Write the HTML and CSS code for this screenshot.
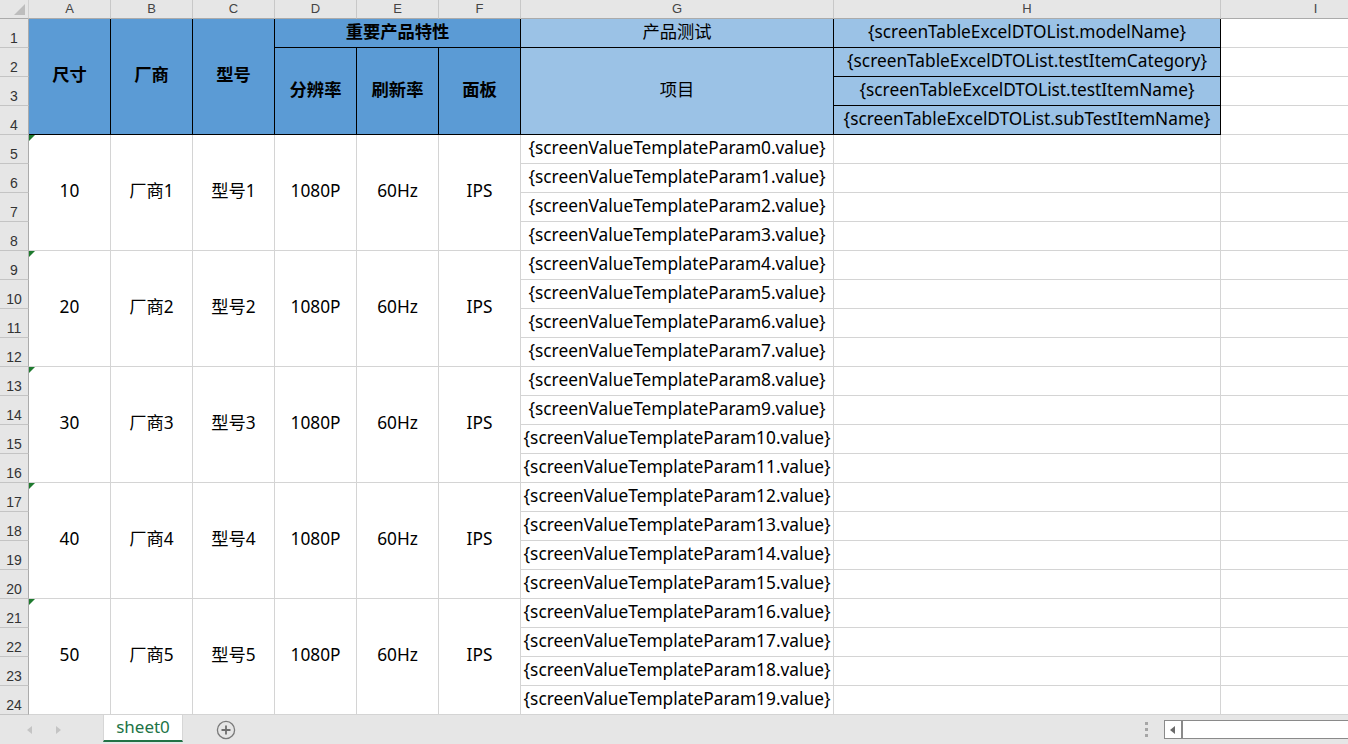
FILE: index.html
```html
<!DOCTYPE html>
<html lang="zh-CN">
<head>
<meta charset="utf-8">
<title>sheet0</title>
<link rel="stylesheet" href="styles.css">
</head>
<body>
<div class="app">
  <div class="viewport">
    <div class="sheet">
      <div class="corner"><svg class="corner-tri" width="12" height="12" viewBox="0 0 12 12"><polygon points="11,0 11,11 0,11" fill="#bdbdbd"/></svg></div>
      <div class="ch">A</div><div class="ch">B</div><div class="ch">C</div><div class="ch">D</div><div class="ch">E</div><div class="ch">F</div><div class="ch">G</div><div class="ch">H</div><div class="ch">I</div>

      <div class="rh">1</div>
      <div class="c hd bk sp4 b">尺寸</div>
      <div class="c hd bk sp4 b">厂商</div>
      <div class="c hd bk sp4 b">型号</div>
      <div class="c hd bk cs3 b">重要产品特性</div>
      <div class="c hl bk">产品测试</div>
      <div class="c hl bk">{screenTableExcelDTOList.modelName}</div>
      <div class="c"></div>

      <div class="rh">2</div>
      <div class="c hd bk sp3 b">分辨率</div>
      <div class="c hd bk sp3 b">刷新率</div>
      <div class="c hd bk sp3 b">面板</div>
      <div class="c hl bk sp3">项目</div>
      <div class="c hl bk">{screenTableExcelDTOList.testItemCategory}</div>
      <div class="c"></div>

      <div class="rh">3</div>
      <div class="c hl bk">{screenTableExcelDTOList.testItemName}</div>
      <div class="c"></div>

      <div class="rh">4</div>
      <div class="c hl bk">{screenTableExcelDTOList.subTestItemName}</div>
      <div class="c"></div>

      <!-- group 1 -->
      <div class="rh">5</div>
      <div class="c sp4 flag">10</div><div class="c sp4">厂商1</div><div class="c sp4">型号1</div><div class="c sp4">1080P</div><div class="c sp4">60Hz</div><div class="c sp4">IPS</div>
      <div class="c">{screenValueTemplateParam0.value}</div><div class="c"></div><div class="c"></div>
      <div class="rh">6</div><div class="c">{screenValueTemplateParam1.value}</div><div class="c"></div><div class="c"></div>
      <div class="rh">7</div><div class="c">{screenValueTemplateParam2.value}</div><div class="c"></div><div class="c"></div>
      <div class="rh">8</div><div class="c">{screenValueTemplateParam3.value}</div><div class="c"></div><div class="c"></div>

      <!-- group 2 -->
      <div class="rh">9</div>
      <div class="c sp4 flag">20</div><div class="c sp4">厂商2</div><div class="c sp4">型号2</div><div class="c sp4">1080P</div><div class="c sp4">60Hz</div><div class="c sp4">IPS</div>
      <div class="c">{screenValueTemplateParam4.value}</div><div class="c"></div><div class="c"></div>
      <div class="rh">10</div><div class="c">{screenValueTemplateParam5.value}</div><div class="c"></div><div class="c"></div>
      <div class="rh">11</div><div class="c">{screenValueTemplateParam6.value}</div><div class="c"></div><div class="c"></div>
      <div class="rh">12</div><div class="c">{screenValueTemplateParam7.value}</div><div class="c"></div><div class="c"></div>

      <!-- group 3 -->
      <div class="rh">13</div>
      <div class="c sp4 flag">30</div><div class="c sp4">厂商3</div><div class="c sp4">型号3</div><div class="c sp4">1080P</div><div class="c sp4">60Hz</div><div class="c sp4">IPS</div>
      <div class="c">{screenValueTemplateParam8.value}</div><div class="c"></div><div class="c"></div>
      <div class="rh">14</div><div class="c">{screenValueTemplateParam9.value}</div><div class="c"></div><div class="c"></div>
      <div class="rh">15</div><div class="c">{screenValueTemplateParam10.value}</div><div class="c"></div><div class="c"></div>
      <div class="rh">16</div><div class="c">{screenValueTemplateParam11.value}</div><div class="c"></div><div class="c"></div>

      <!-- group 4 -->
      <div class="rh">17</div>
      <div class="c sp4 flag">40</div><div class="c sp4">厂商4</div><div class="c sp4">型号4</div><div class="c sp4">1080P</div><div class="c sp4">60Hz</div><div class="c sp4">IPS</div>
      <div class="c">{screenValueTemplateParam12.value}</div><div class="c"></div><div class="c"></div>
      <div class="rh">18</div><div class="c">{screenValueTemplateParam13.value}</div><div class="c"></div><div class="c"></div>
      <div class="rh">19</div><div class="c">{screenValueTemplateParam14.value}</div><div class="c"></div><div class="c"></div>
      <div class="rh">20</div><div class="c">{screenValueTemplateParam15.value}</div><div class="c"></div><div class="c"></div>

      <!-- group 5 -->
      <div class="rh">21</div>
      <div class="c sp4 flag">50</div><div class="c sp4">厂商5</div><div class="c sp4">型号5</div><div class="c sp4">1080P</div><div class="c sp4">60Hz</div><div class="c sp4">IPS</div>
      <div class="c">{screenValueTemplateParam16.value}</div><div class="c"></div><div class="c"></div>
      <div class="rh">22</div><div class="c">{screenValueTemplateParam17.value}</div><div class="c"></div><div class="c"></div>
      <div class="rh">23</div><div class="c">{screenValueTemplateParam18.value}</div><div class="c"></div><div class="c"></div>
      <div class="rh">24</div><div class="c">{screenValueTemplateParam19.value}</div><div class="c"></div><div class="c"></div>
    </div>
  </div>

  <div class="tabbar">
    <div class="nav">
      <svg width="8" height="10" viewBox="0 0 8 10"><polygon points="6,1 6,9 1,5" fill="#c4c4c4"/></svg>
      <svg width="8" height="10" viewBox="0 0 8 10"><polygon points="2,1 2,9 7,5" fill="#c4c4c4"/></svg>
    </div>
    <div class="tab">sheet0</div>
    <div class="add">
      <svg width="20" height="20" viewBox="0 0 20 20"><circle cx="10" cy="10" r="8.6" fill="none" stroke="#7a7a7a" stroke-width="1.3"/><path d="M10 5.5V14.5M5.5 10H14.5" stroke="#6e6e6e" stroke-width="1.8"/></svg>
    </div>
    <div class="spacer"></div>
    <div class="dots"><span></span><span></span><span></span></div>
    <div class="hscroll">
      <div class="hs-btn"><svg width="8" height="10" viewBox="0 0 8 10"><polygon points="6,1 6,9 1,5" fill="#6a6a6a"/></svg></div>
      <div class="hs-track"></div>
    </div>
  </div>
</div>
</body>
</html>
```

FILE: styles.css
```css
html, body {
  margin: 0;
  padding: 0;
  background: #ffffff;
  overflow: hidden;
}

.app {
  width: 1348px;
  height: 744px;
  display: flex;
  flex-direction: column;
  overflow: hidden;
  font-family: "Noto Sans", "Noto Sans CJK SC", sans-serif;
}

.viewport {
  height: 715px;
  overflow: hidden;
}

.sheet {
  display: grid;
  grid-template-columns: 29px repeat(6, 82px) 313px 387px 190px;
  grid-template-rows: 19px repeat(24, 29px);
  width: 1538px;
}

.sheet > div {
  box-sizing: border-box;
}

.corner {
  background: #e6e6e6;
  border-right: 1px solid #d0d0d0;
  border-bottom: 1px solid #ababab;
  position: relative;
}

.corner-tri {
  position: absolute;
  left: 14px;
  top: 4px;
}

.ch {
  background: #e6e6e6;
  border-right: 1px solid #c8c8c8;
  border-bottom: 1px solid #ababab;
  font-family: "Liberation Sans", Arial, sans-serif;
  font-size: 13px;
  color: #444;
  display: flex;
  align-items: center;
  justify-content: center;
  line-height: 18px;
}

.rh {
  grid-column: 1;
  background: #e6e6e6;
  border-right: 1px solid #ababab;
  border-bottom: 1px solid #c4c4c4;
  font-family: "Liberation Sans", Arial, sans-serif;
  font-size: 14px;
  color: #333;
  display: flex;
  align-items: flex-end;
  justify-content: center;
  padding-bottom: 1px;
  line-height: 16px;
}

.c {
  border-right: 1px solid #d4d4d4;
  border-bottom: 1px solid #d4d4d4;
  display: flex;
  align-items: center;
  justify-content: center;
  white-space: nowrap;
  font-size: 17.3px;
  line-height: 22px;
  padding-bottom: 3px;
  color: #000;
  position: relative;
}

.hd {
  background: #5b9bd5;
}

.hl {
  background: #9bc2e6;
}

.bk {
  border-right-color: #000;
  border-bottom-color: #000;
}

.b {
  font-weight: bold;
}

.sp4 {
  grid-row: span 4;
}

.sp3 {
  grid-row: span 3;
}

.cs3 {
  grid-column: span 3;
}

.flag::before {
  content: "";
  position: absolute;
  left: 0;
  top: 0;
  width: 0;
  height: 0;
  border-top: 6px solid #1e7a2e;
  border-right: 6px solid transparent;
}

.tabbar {
  height: 29px;
  background: #e6e6e6;
  display: flex;
  align-items: stretch;
}

.nav {
  width: 103px;
  display: flex;
  align-items: center;
  gap: 20px;
  padding-left: 26px;
  box-sizing: border-box;
}

.tab {
  width: 80px;
  height: 27px;
  background: #fff;
  border-left: 1px solid #d6d6d6;
  border-right: 1px solid #d6d6d6;
  border-bottom: 2px solid #217346;
  box-sizing: border-box;
  color: #217346;
  font-family: "Noto Sans", sans-serif;
  font-size: 17px;
  display: flex;
  align-items: center;
  justify-content: center;
  line-height: 20px;
  padding-bottom: 2px;
}

.add {
  margin-left: 33px;
  display: flex;
  align-items: center;
}

.spacer {
  flex: 1;
}

.dots {
  width: 4px;
  display: flex;
  flex-direction: column;
  justify-content: center;
  gap: 3px;
  margin-right: 15px;
}

.dots span {
  width: 3px;
  height: 3px;
  background: #a6a6a6;
}

.hscroll {
  width: 184px;
  height: 19px;
  margin-top: 5px;
  border: 1px solid #8a8a8a;
  border-right: none;
  box-sizing: border-box;
  background: #fff;
  display: flex;
}

.hs-btn {
  width: 18px;
  border-right: 2px solid #8a8a8a;
  display: flex;
  align-items: center;
  justify-content: center;
  box-sizing: border-box;
}

.hs-track {
  flex: 1;
}
```
